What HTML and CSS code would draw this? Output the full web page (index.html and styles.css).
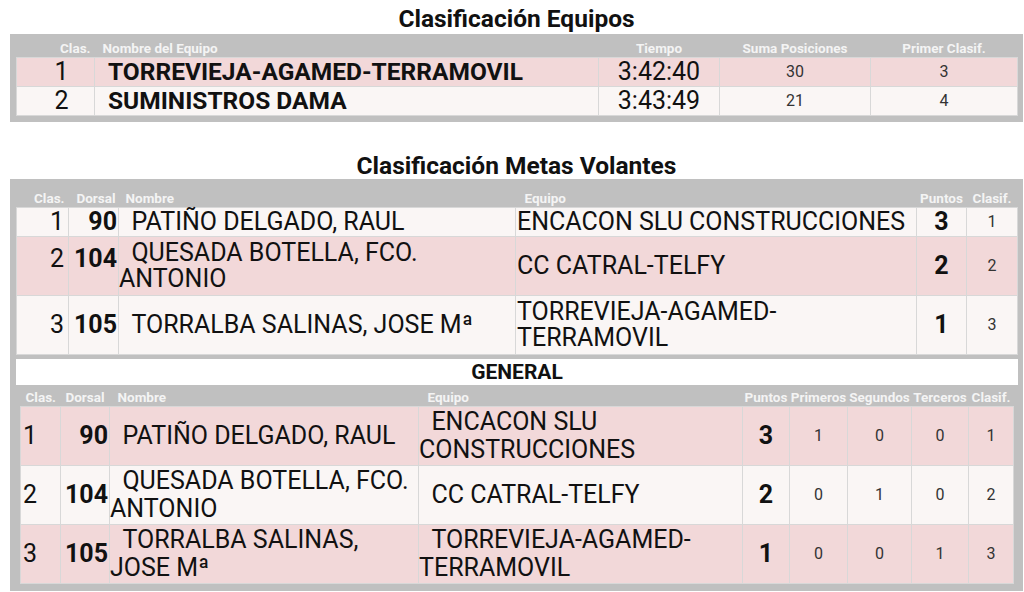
FILE: index.html
```html
<!DOCTYPE html>
<html lang="es">
<head>
<meta charset="utf-8">
<title>Clasificaciones</title>
<link rel="stylesheet" href="styles.css">
</head>
<body>
<div class="page">
  <h2 class="title">Clasificación Equipos</h2>
  <div class="box">
    <table class="t1">
      <colgroup>
        <col class="w78"><col class="w504"><col class="w121"><col class="w151"><col>
      </colgroup>
      <thead>
        <tr><th class="right">Clas.</th><th class="left">Nombre del Equipo</th><th>Tiempo</th><th>Suma Posiciones</th><th>Primer Clasif.</th></tr>
      </thead>
      <tbody>
        <tr class="pink"><td class="pos1">1</td><td class="team">TORREVIEJA-AGAMED-TERRAMOVIL</td><td class="time">3:42:40</td><td class="small">30</td><td class="small">3</td></tr>
        <tr class="light"><td class="pos1">2</td><td class="team">SUMINISTROS DAMA</td><td class="time">3:43:49</td><td class="small">21</td><td class="small">4</td></tr>
      </tbody>
    </table>
  </div>

  <h2 class="title title-2">Clasificación Metas Volantes</h2>
  <div class="box box-2">
    <table class="t2">
      <colgroup>
        <col class="w52"><col class="w50"><col class="w397"><col class="w401"><col class="w50"><col>
      </colgroup>
      <thead>
        <tr><th class="right">Clas.</th><th class="right">Dorsal</th><th class="left">Nombre</th><th class="left">Equipo</th><th>Puntos</th><th>Clasif.</th></tr>
      </thead>
      <tbody>
        <tr class="light short"><td class="pos">1</td><td class="dorsal">90</td><td class="name">&nbsp;&nbsp;PATIÑO DELGADO, RAUL</td><td class="team-n">ENCACON SLU CONSTRUCCIONES</td><td class="pts">3</td><td class="small">1</td></tr>
        <tr class="pink tall raised"><td class="pos">2</td><td class="dorsal">104</td><td class="name">&nbsp;&nbsp;QUESADA BOTELLA, FCO. ANTONIO</td><td class="team-n">CC CATRAL-TELFY</td><td class="pts">2</td><td class="small">2</td></tr>
        <tr class="light tall"><td class="pos">3</td><td class="dorsal">105</td><td class="name">&nbsp;&nbsp;TORRALBA SALINAS, JOSE Mª</td><td class="team-n">TORREVIEJA-AGAMED-TERRAMOVIL</td><td class="pts">1</td><td class="small">3</td></tr>
      </tbody>
    </table>
    <div class="general-bar">GENERAL</div>
    <div class="general-wrap">
      <table class="t3">
        <colgroup>
          <col class="w40"><col class="w49"><col class="w309"><col class="w324"><col class="w47"><col class="w58"><col class="w64"><col class="w57"><col>
        </colgroup>
        <thead>
          <tr><th class="left">Clas.</th><th>Dorsal</th><th class="left">Nombre</th><th class="left">Equipo</th><th>Puntos</th><th>Primeros</th><th>Segundos</th><th>Terceros</th><th>Clasif.</th></tr>
        </thead>
        <tbody>
          <tr class="pink tall"><td class="pos-l">1</td><td class="dorsal">90</td><td class="name">&nbsp;&nbsp;PATIÑO DELGADO, RAUL</td><td class="name">&nbsp;&nbsp;ENCACON SLU CONSTRUCCIONES</td><td class="pts">3</td><td class="small">1</td><td class="small">0</td><td class="small">0</td><td class="small">1</td></tr>
          <tr class="light tall"><td class="pos-l">2</td><td class="dorsal">104</td><td class="name">&nbsp;&nbsp;QUESADA BOTELLA, FCO. ANTONIO</td><td class="name">&nbsp;&nbsp;CC CATRAL-TELFY</td><td class="pts">2</td><td class="small">0</td><td class="small">1</td><td class="small">0</td><td class="small">2</td></tr>
          <tr class="pink tall"><td class="pos-l">3</td><td class="dorsal">105</td><td class="name">&nbsp;&nbsp;TORRALBA SALINAS, JOSE Mª</td><td class="name">&nbsp;&nbsp;TORREVIEJA-AGAMED-TERRAMOVIL</td><td class="pts">1</td><td class="small">0</td><td class="small">0</td><td class="small">1</td><td class="small">3</td></tr>
        </tbody>
      </table>
    </div>
  </div>
</div>
</body>
</html>
```

FILE: styles.css
```css
body {
  margin: 0;
  background: #ffffff;
  color: #111111;
  font-family: Roboto, "Noto Sans", "DejaVu Sans", sans-serif;
}

.page {
  width: 1013px;
  margin-left: 10px;
}

.title {
  margin: 7px 0 3px;
  font-size: 24.5px;
  line-height: 24px;
  font-weight: 700;
  text-align: center;
  color: #111111;
}

.title-2 {
  margin-top: 32px;
  margin-bottom: 1px;
}

.box {
  background: #c0c0c0;
  padding: 6px 5px 6px 6px;
}

.box-2 {
  padding-bottom: 4px;
}

table {
  width: 100%;
  border-collapse: collapse;
  table-layout: fixed;
}

th {
  font-size: 13.5px;
  line-height: 15px;
  font-weight: 700;
  color: #f4f4f4;
  padding: 0 0 1px;
  text-align: center;
  vertical-align: bottom;
  white-space: nowrap;
  border: none;
}

th.left { text-align: left; }
th.right { text-align: right; }

td {
  border: 1px solid #d8d8d8;
  padding: 0;
  vertical-align: middle;
  font-size: 25px;
  line-height: 26px;
}

tr.pink td { background: #f2d8d9; }
tr.light td { background: #faf6f5; }

/* column widths */
.w40 { width: 40px; }
.w47 { width: 47px; }
.w49 { width: 49px; }
.w50 { width: 50px; }
.w52 { width: 52px; }
.w57 { width: 57px; }
.w58 { width: 58px; }
.w64 { width: 64px; }
.w78 { width: 78px; }
.w121 { width: 121px; }
.w151 { width: 151px; }
.w309 { width: 309px; }
.w324 { width: 324px; }
.w397 { width: 397px; }
.w401 { width: 401px; }
.w504 { width: 504px; }

/* table 1 */
.t1 thead tr { height: 17px; }
.t1 th.right { padding-right: 4px; }
.t1 th.left { padding-left: 8px; }
.t1 tbody tr { height: 29px; }

.pos1 {
  text-align: center;
  padding-left: 12px;
}

.team {
  font-size: 24.5px;
  font-weight: 700;
  padding-left: 13px;
  white-space: nowrap;
}

.time {
  text-align: center;
  font-size: 25px;
}

.small {
  text-align: center;
  font-size: 16px;
  color: #333333;
}

/* table 2 */
.t2 thead tr { height: 23px; }
.t2 th.right { padding-right: 4px; }
.t2 th:nth-child(2) { padding-right: 3px; }
.t2 th:nth-child(3) { padding-left: 7px; }
.t2 th:nth-child(4) { padding-left: 9px; }

tr.short { height: 29px; }
tr.tall { height: 59px; }

.pos {
  text-align: right;
  padding-right: 4px;
}

.dorsal {
  text-align: right;
  font-weight: 700;
  padding-right: 1px;
}

.name {
  text-align: left;
}

.team-n {
  text-align: left;
  padding-left: 1px;
}

.pts {
  text-align: center;
  font-weight: 700;
}

tr.raised .pos,
tr.raised .dorsal {
  padding-bottom: 14px;
}

/* general */
.general-bar {
  margin-top: 4px;
  background: #ffffff;
  height: 26px;
  line-height: 26px;
  text-align: center;
  font-weight: 700;
  font-size: 21px;
  color: #111111;
}

.general-wrap {
  padding: 0 4px 3px;
}

.t3 thead tr { height: 21px; }
.t3 td { line-height: 28px; }
.t3 th.left { padding-left: 5px; }
.t3 th:nth-child(3) { padding-left: 8px; }
.t3 th:nth-child(4) { padding-left: 9px; }

.pos-l {
  text-align: left;
  padding-left: 2px;
}
```
